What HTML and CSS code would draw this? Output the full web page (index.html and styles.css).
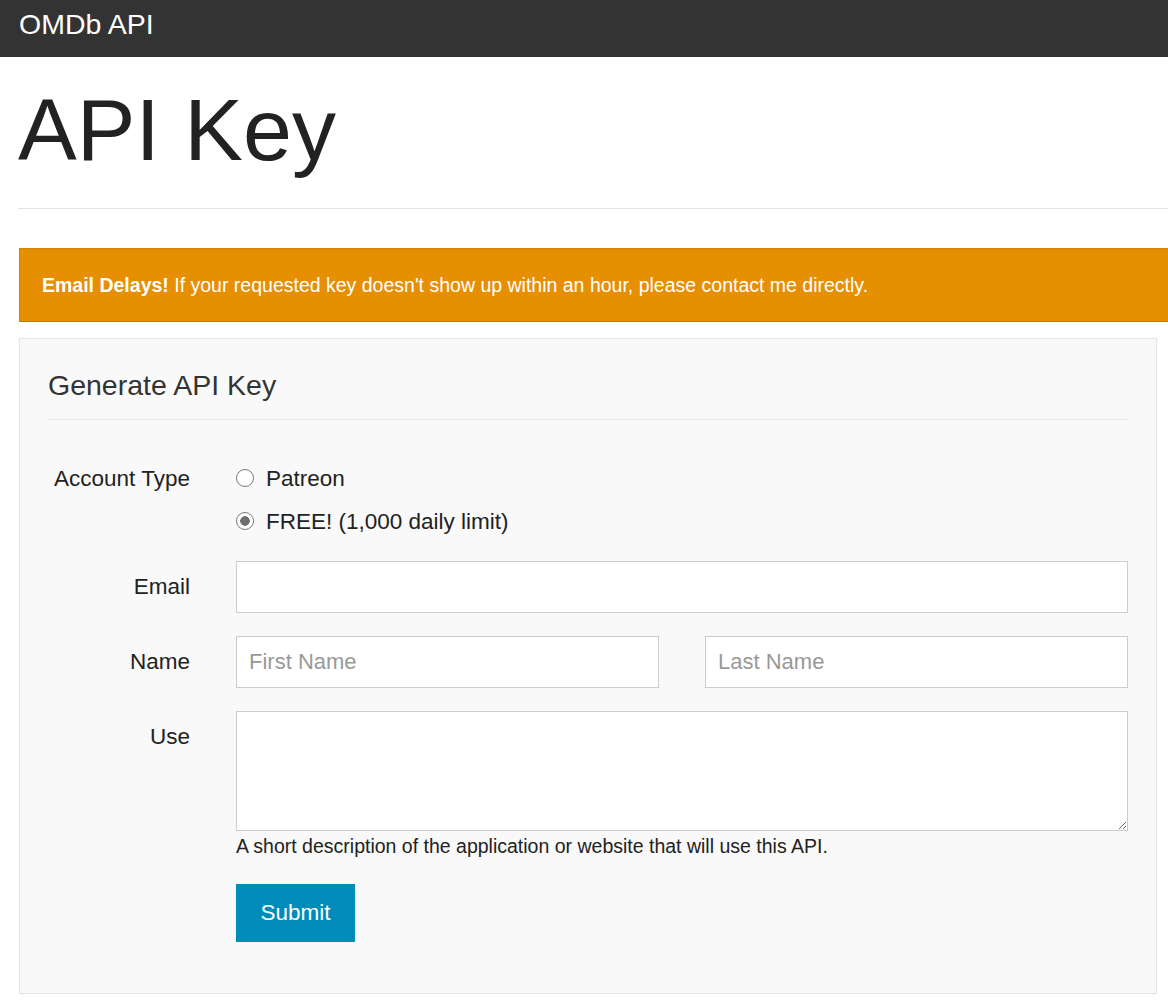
FILE: index.html
```html
<!DOCTYPE html>
<html lang="en">
  <head>
    <meta charset="UTF-8" />
    <meta name="viewport" content="width=device-width, initial-scale=1.0" />
    <title>OMDb API - API Key</title>
    <link rel="stylesheet" href="styles.css">
  </head>
  <body>
    <div class="navbar">
      <a class="brand" href="#">OMDb API</a>
    </div>

    <div class="page">
      <div class="pageHeader">
        <h1>API Key</h1>
      </div>

      <div class="alert">
        <strong>Email Delays!</strong> If your requested key doesn't show up within an hour, please contact me directly.
      </div>

      <div class="well">
        <form>
          <div class="legend">Generate API Key</div>

          <div class="formRow accountRow">
            <label class="rowLabel">Account Type</label>
            <div class="radios">
              <label class="radio"><input type="radio" name="type" value="patreon" /> Patreon</label>
              <label class="radio"><input type="radio" name="type" value="free" checked /> FREE! (1,000 daily limit)</label>
            </div>
          </div>

          <div class="formRow">
            <label class="rowLabel" for="email">Email</label>
            <div class="field">
              <input class="input" type="email" id="email" />
            </div>
          </div>

          <div class="formRow">
            <label class="rowLabel" for="firstName">Name</label>
            <div class="field nameFields">
              <input class="input" type="text" id="firstName" placeholder="First Name" />
              <input class="input" type="text" id="lastName" placeholder="Last Name" />
            </div>
          </div>

          <div class="formRow useRow">
            <label class="rowLabel" for="use">Use</label>
            <div class="field">
              <textarea class="input textarea" id="use"></textarea>
              <div class="helpText">A short description of the application or website that will use this API.</div>
              <button type="button" class="submitButton">Submit</button>
            </div>
          </div>
        </form>
      </div>
    </div>
  </body>
</html>
```

FILE: styles.css
```css
html,
body {
  overflow-x: hidden;
}

body {
  margin: 0;
  font-family: "Liberation Sans", Arial, Helvetica, sans-serif;
  color: #222;
  background-color: #fff;
}

.navbar {
  height: 57px;
  background-color: #333;
  padding-left: 19px;
}

.brand {
  display: inline-block;
  font-size: 28.5px;
  line-height: 48px;
  color: #fff;
  text-decoration: none;
}

.page {
  width: 1180px;
  padding-left: 18px;
}

.pageHeader {
  padding-top: 24px;
  padding-bottom: 30px;
  border-bottom: 1px solid #e2e2e2;
}

h1 {
  margin: 0;
  font-size: 88px;
  font-weight: normal;
  line-height: 97px;
  color: #222;
}

.alert {
  margin-top: 39px;
  margin-left: 1px;
  padding: 23px 22px 23px;
  font-size: 19.5px;
  line-height: 26px;
  color: #fff;
  background-color: #e78f03;
  border: 1px solid #d4830a;
  border-bottom-color: #c27a14;
}

.well {
  width: 1080px;
  margin-top: 16px;
  margin-left: 1px;
  padding: 28px 28px 28px;
  background-color: #f9f9f9;
  border: 1px solid #e3e3e3;
}

.legend {
  font-size: 28.5px;
  line-height: 36px;
  color: #333;
  padding-bottom: 16px;
  border-bottom: 1px solid #e5e5e5;
  margin-bottom: 37px;
}

.formRow {
  display: grid;
  grid-template-columns: 142px 1fr;
  column-gap: 46px;
  margin-bottom: 23px;
  font-size: 22.5px;
}

.accountRow {
  margin-bottom: 18px;
}

.rowLabel {
  text-align: right;
  line-height: 52px;
  color: #222;
}

.accountRow .rowLabel {
  line-height: 43px;
}

.radios {
  display: flex;
  flex-direction: column;
}

.radio {
  display: flex;
  align-items: center;
  gap: 12px;
  line-height: 43px;
  color: #222;
}

.radio input {
  appearance: none;
  margin: 0;
  width: 18px;
  height: 18px;
  border: 1.5px solid #7a7a7a;
  border-radius: 50%;
  background-color: #fff;
  position: relative;
  top: -1px;
}

.radio input:checked {
  background: radial-gradient(circle, #6f6f6f 0 4.5px, #fff 5px);
}

.field {
  display: flex;
  flex-direction: column;
  align-items: flex-start;
}

.input {
  box-sizing: border-box;
  width: 100%;
  height: 52px;
  padding: 0 12px;
  font-family: inherit;
  font-size: 22px;
  color: #222;
  background-color: #fff;
  border: 1px solid #ccc;
  border-radius: 0;
  outline: none;
}

.input::placeholder {
  color: #999;
}

.nameFields {
  flex-direction: row;
  gap: 46px;
}

.textarea {
  display: block;
  height: 120px;
  padding: 10px 12px;
  resize: vertical;
}

.helpText {
  margin-top: 3px;
  font-size: 19.5px;
  line-height: 24px;
  color: #222;
}

.submitButton {
  margin-top: 26px;
  width: 119px;
  height: 58px;
  font-family: inherit;
  font-size: 22.5px;
  color: #fff;
  background-color: #008cba;
  border: none;
  border-radius: 0;
  cursor: pointer;
}
```
